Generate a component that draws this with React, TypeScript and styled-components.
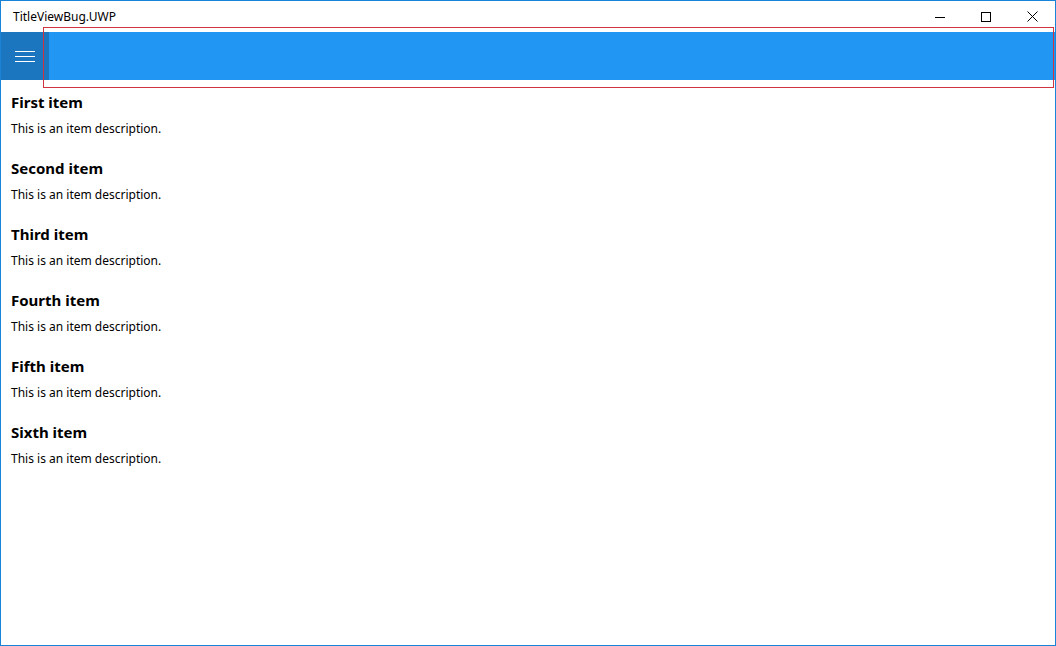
import React from "react";
import styled, { createGlobalStyle } from "styled-components";

const GlobalStyle = createGlobalStyle`
    html, body {
        margin: 0;
        padding: 0;
        background: #fff;
    }
    body {
        font-family: "Noto Sans", "Open Sans", sans-serif;
        color: #000;
    }
`;

const items = ["First item", "Second item", "Third item", "Fourth item", "Fifth item", "Sixth item"];

const App = () => {
    return (
        <>
            <GlobalStyle />
            <Window>
                <TitleBar>
                    <Caption>TitleViewBug.UWP</Caption>
                    <CaptionButtons>
                        <CaptionButton aria-label="Minimize">
                            <svg width="10" height="10" viewBox="0 0 10 10">
                                <path d="M0 5.5h10" stroke="#000" strokeWidth="1" />
                            </svg>
                        </CaptionButton>
                        <CaptionButton aria-label="Maximize">
                            <svg width="10" height="10" viewBox="0 0 10 10">
                                <rect x="0.5" y="0.5" width="9" height="9" fill="none" stroke="#000" strokeWidth="1" />
                            </svg>
                        </CaptionButton>
                        <CaptionButton aria-label="Close">
                            <svg width="11" height="11" viewBox="0 0 11 11">
                                <path d="M0.5 0.5l10 10M10.5 0.5l-10 10" stroke="#000" strokeWidth="1" />
                            </svg>
                        </CaptionButton>
                    </CaptionButtons>
                </TitleBar>
                <AppBar>
                    <MenuButton aria-label="Menu">
                        <svg width="20" height="11" viewBox="0 0 20 11">
                            <path d="M0 0.5h20M0 5.5h20M0 10.5h20" stroke="#fff" strokeWidth="1" />
                        </svg>
                    </MenuButton>
                    <TitleView />
                </AppBar>
                <ItemList>
                    {items.map((title) => (
                        <Item key={title}>
                            <ItemTitle>{title}</ItemTitle>
                            <ItemDesc>This is an item description.</ItemDesc>
                        </Item>
                    ))}
                </ItemList>
            </Window>
        </>
    );
};

export default App;

const Window = styled.div`
    position: relative;
    box-sizing: border-box;
    width: 1056px;
    height: 646px;
    border: 1px solid #1883d7;
    overflow: hidden;
    display: flex;
    flex-direction: column;
`;

const TitleBar = styled.div`
    height: 31px;
    display: flex;
    align-items: center;
    justify-content: space-between;
    flex-shrink: 0;
`;

const Caption = styled.span`
    padding-left: 12px;
    font-size: 12px;
    line-height: 16px;
`;

const CaptionButtons = styled.div`
    display: flex;
    height: 100%;
`;

const CaptionButton = styled.div`
    width: 46px;
    height: 100%;
    display: flex;
    align-items: center;
    justify-content: center;
    svg {
        display: block;
    }
`;

const AppBar = styled.div`
    height: 48px;
    display: flex;
    background: #2196f3;
    flex-shrink: 0;
`;

const MenuButton = styled.div`
    width: 48px;
    height: 48px;
    background: #1c75bf;
    display: flex;
    align-items: center;
    justify-content: center;
    svg {
        display: block;
    }
`;

/* the outline of the title view, drawn over the bar */
const TitleView = styled.div`
    position: absolute;
    left: 42px;
    top: 26px;
    width: 1011px;
    height: 61px;
    box-sizing: border-box;
    border: 1px solid #d1343e;
    pointer-events: none;
`;

const ItemList = styled.div`
    display: flex;
    flex-direction: column;
    gap: 19px;
    padding: 12px 10px 0;
`;

const Item = styled.div`
    display: flex;
    flex-direction: column;
    gap: 7px;
`;

const ItemTitle = styled.div`
    font-size: 15px;
    font-weight: 700;
    line-height: 20px;
`;

const ItemDesc = styled.div`
    font-size: 12px;
    line-height: 20px;
`;
